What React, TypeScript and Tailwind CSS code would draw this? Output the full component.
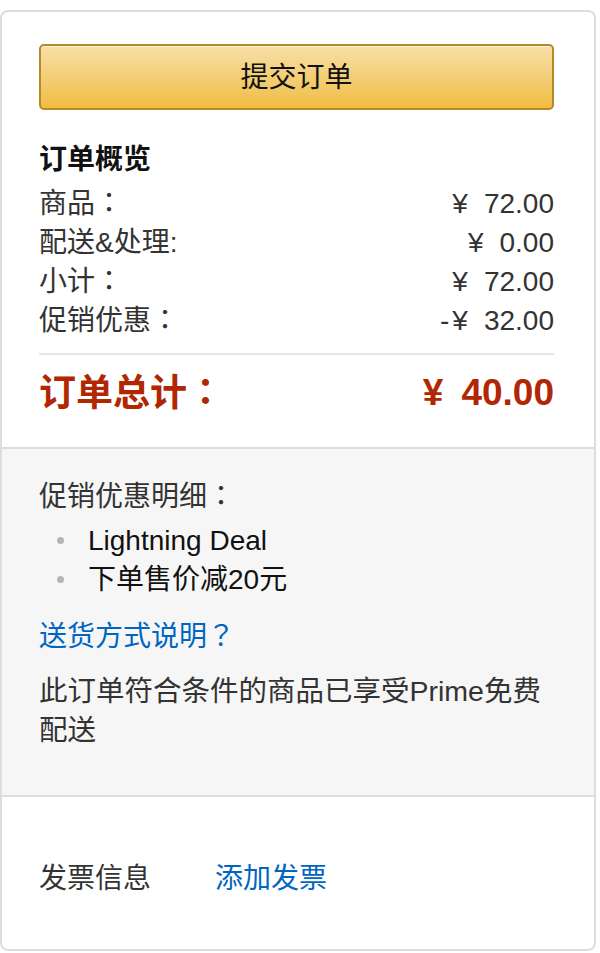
const font = { fontFamily: '"Liberation Sans", "Noto Sans CJK SC", sans-serif' };
const tc = { fontFamily: '"Noto Sans CJK TC", sans-serif' };

function P({ ch }: { ch: string }) {
  return (
    <span className="[text-spacing-trim:space-all] leading-none" style={tc}>
      {ch}
    </span>
  );
}

function Money({ value, minus }: { value: string; minus?: boolean }) {
  return (
    <span>
      {minus && <span className="mr-[3px]">-</span>}
      <span className="mr-[16px]">¥</span>
      {value}
    </span>
  );
}

function Row({ label, colon, value, minus }: { label: string; colon?: boolean; value: string; minus?: boolean }) {
  return (
    <div className="flex justify-between h-[39px] items-center">
      <span>
        {label}
        {colon && <P ch="：" />}
      </span>
      <Money value={value} minus={minus} />
    </div>
  );
}

export default function App() {
  return (
    <div className="bg-white min-h-[953px] pt-[10px]" style={font}>
      <div className="w-[596px] h-[941px] border-2 border-[#dddddd] rounded-[8px] overflow-hidden text-[#111] text-[28px] leading-[39px]">
        <div className="pl-[37px] pr-[40px] pt-[32px] pb-[32px]">
          <button className="w-full h-[66px] rounded-[5px] border-2 border-[#b38b2b] bg-gradient-to-b from-[#f7dfa5] to-[#f0bd3c] text-[28px] text-[#111] flex items-center justify-center shadow-[inset_0_1px_0_rgba(255,255,255,0.6)]">
            提交订单
          </button>
          <div className="mt-[30px] font-bold">订单概览</div>
          <div className="mt-[5px] text-[#333]">
            <Row label="商品" colon value="72.00" />
            <Row label="配送&处理:" value="0.00" />
            <Row label="小计" colon value="72.00" />
            <Row label="促销优惠" colon value="32.00" minus />
          </div>
          <div className="mt-[13px] h-[2px] bg-[#e7e7e7]" />
          <div className="mt-[15px] flex justify-between items-center h-[45px] text-[#b12704] font-bold text-[37px]">
            <span>
              订单总计
              <P ch="：" />
            </span>
            <span>
              <span className="mr-[18px]">¥</span>40.00
            </span>
          </div>
        </div>
        <div className="border-t-2 border-b-2 border-[#dddddd] bg-[#f6f6f6] pl-[37px] pr-[40px] pt-[28px] pb-[45px] text-[#333]">
          <div className="h-[39px]">
            促销优惠明细
            <P ch="：" />
          </div>
          <ul className="mt-[5px] text-[#111]">
            <li className="flex items-center h-[39px]">
              <span className="w-[7px] h-[7px] rounded-full bg-[#b5b5b5] ml-[18px] mr-[24px]" />
              Lightning Deal
            </li>
            <li className="flex items-center h-[39px]">
              <span className="w-[7px] h-[7px] rounded-full bg-[#b5b5b5] ml-[18px] mr-[24px]" />
              下单售价减20元
            </li>
          </ul>
          <div className="mt-[18px] h-[39px] text-[#0066c0]">
            送货方式说明
            <P ch="？" />
          </div>
          <p className="mt-[16px] text-[28.5px]">此订单符合条件的商品已享受Prime免费配送</p>
        </div>
        <div className="pl-[37px] pr-[40px] pt-[62px] flex text-[#333]">
          <span className="w-[176px]">发票信息</span>
          <span className="text-[#0066c0]">添加发票</span>
        </div>
      </div>
    </div>
  );
}
